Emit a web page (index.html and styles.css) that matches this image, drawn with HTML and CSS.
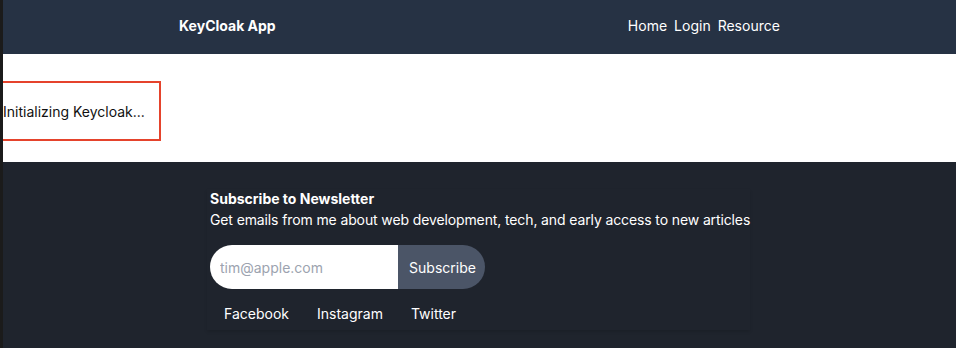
FILE: index.html
```html
<!DOCTYPE html>
<html lang="en">
<head>
<meta charset="utf-8">
<title>KeyCloak App</title>
<link rel="stylesheet" href="styles.css">
</head>
<body>
<div class="page">
  <header class="header">
    <div class="brand">KeyCloak App</div>
    <nav class="nav">
      <a href="#">Home</a>
      <a href="#">Login</a>
      <a href="#">Resource</a>
    </nav>
  </header>
  <main class="main">
    <div class="status">Initializing Keycloak...</div>
  </main>
  <footer class="footer">
    <div class="newsletter">
      <h2 class="news-title">Subscribe to Newsletter</h2>
      <p class="news-text">Get emails from me about web development, tech, and early access to new articles</p>
      <form class="news-form">
        <input class="news-input" type="email" placeholder="tim@apple.com">
        <button class="news-btn" type="button">Subscribe</button>
      </form>
      <div class="social">
        <a href="#">Facebook</a>
        <a href="#">Instagram</a>
        <a href="#">Twitter</a>
      </div>
    </div>
  </footer>
</div>
</body>
</html>
```

FILE: styles.css
```css
* { box-sizing: border-box; }
html, body { margin: 0; padding: 0; height: 100%; }
body {
  font-family: Inter, "Noto Sans", sans-serif;
  font-size: 14px;
  background: #1f242d;
  border-left: 3px solid #1b1b1b;
  overflow: hidden;
}
.page { display: flex; flex-direction: column; min-height: 100%; }
.header {
  height: 54px;
  background: #263244;
  display: flex;
  justify-content: space-around;
  align-items: center;
  color: #fff;
  padding-bottom: 4px;
}
.brand { font-weight: 700; font-size: 14px; }
.nav { display: flex; gap: 7px; }
.nav a { color: #fff; text-decoration: none; font-size: 14px; }
.main {
  background: #fff;
  padding: 29px 0 23px;
}
.status {
  width: 156px;
  height: 56px;
  display: flex;
  align-items: center;
  font-size: 14px;
  color: #111;
  outline: 2px solid #e5432c;
}
.footer {
  flex: 1;
  background: #1f242d;
  padding: 21px 0 0 204px;
}
.newsletter {
  width: 543px;
  padding: 0 0 8px 3px;
  box-shadow: 0 2px 3px rgba(0,0,0,0.12);
  color: #fff;
}
.news-title { margin: 6px 0 0; font-size: 14px; font-weight: 700; line-height: 20px; }
.news-text { margin: 0; font-size: 14px; line-height: 22px; white-space: nowrap; letter-spacing: -0.12px; }
.news-form { display: flex; margin-top: 14px; height: 44px; }
.news-input {
  width: 188px;
  border: 0;
  border-radius: 22px 0 0 22px;
  padding: 0 10px;
  font-family: inherit;
  font-size: 14px;
  color: #333;
  outline: none;
}
.news-input::placeholder { color: #9ca3af; }
.news-btn {
  width: 87px;
  border: 0;
  border-radius: 0 22px 22px 0;
  background: #4b5567;
  color: #fff;
  font-family: inherit;
  font-size: 14px;
  padding: 0 0 0 2px;
}
.social { display: flex; gap: 28px; padding: 16px 0 0 14px; }
.social a { color: #fff; text-decoration: none; font-size: 14px; }
```
